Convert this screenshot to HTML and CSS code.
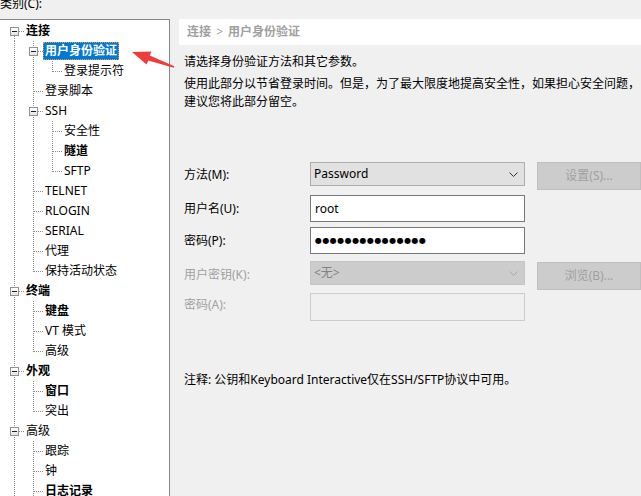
FILE: index.html
```html
<!DOCTYPE html>
<html lang="zh-CN">
<head>
<meta charset="utf-8">
<title>会话属性</title>
<link rel="stylesheet" href="styles.css">
</head>
<body>
<div class="cat-label">类别(C):</div>
<div class="main">
  <div class="tree">
    <div class="row"><span class="c f"><i class="box"></i></span><span class="lbl b">连接</span></div>
    <div class="row"><span class="c v"></span><span class="c t"><i class="box"></i></span><span class="lbl b sel">用户身份验证</span></div>
    <div class="row"><span class="c v"></span><span class="c v"></span><span class="c l"></span><span class="lbl">登录提示符</span></div>
    <div class="row"><span class="c v"></span><span class="c t"></span><span class="lbl">登录脚本</span></div>
    <div class="row"><span class="c v"></span><span class="c t"><i class="box"></i></span><span class="lbl">SSH</span></div>
    <div class="row"><span class="c v"></span><span class="c v"></span><span class="c t"></span><span class="lbl">安全性</span></div>
    <div class="row"><span class="c v"></span><span class="c v"></span><span class="c t"></span><span class="lbl b">隧道</span></div>
    <div class="row"><span class="c v"></span><span class="c v"></span><span class="c l"></span><span class="lbl">SFTP</span></div>
    <div class="row"><span class="c v"></span><span class="c t"></span><span class="lbl">TELNET</span></div>
    <div class="row"><span class="c v"></span><span class="c t"></span><span class="lbl">RLOGIN</span></div>
    <div class="row"><span class="c v"></span><span class="c t"></span><span class="lbl">SERIAL</span></div>
    <div class="row"><span class="c v"></span><span class="c t"></span><span class="lbl">代理</span></div>
    <div class="row"><span class="c v"></span><span class="c l"></span><span class="lbl">保持活动状态</span></div>
    <div class="row"><span class="c t"><i class="box"></i></span><span class="lbl b">终端</span></div>
    <div class="row"><span class="c v"></span><span class="c t"></span><span class="lbl b">键盘</span></div>
    <div class="row"><span class="c v"></span><span class="c t"></span><span class="lbl">VT 模式</span></div>
    <div class="row"><span class="c v"></span><span class="c l"></span><span class="lbl">高级</span></div>
    <div class="row"><span class="c t"><i class="box"></i></span><span class="lbl b">外观</span></div>
    <div class="row"><span class="c v"></span><span class="c t"></span><span class="lbl b">窗口</span></div>
    <div class="row"><span class="c v"></span><span class="c l"></span><span class="lbl">突出</span></div>
    <div class="row"><span class="c t"><i class="box"></i></span><span class="lbl">高级</span></div>
    <div class="row"><span class="c v"></span><span class="c t"></span><span class="lbl">跟踪</span></div>
    <div class="row"><span class="c v"></span><span class="c t"></span><span class="lbl">钟</span></div>
    <div class="row"><span class="c v"></span><span class="c t"></span><span class="lbl b">日志记录</span></div>
  </div>

  <div class="panel">
    <div class="crumb">连接 <span class="gt">&gt;</span> 用户身份验证</div>
    <div class="intro">
      <p class="p1">请选择身份验证方法和其它参数。</p>
      <p class="p2">使用此部分以节省登录时间。但是，为了最大限度地提高安全性，如果担心安全问题，建议您将此部分留空。</p>
    </div>

    <div class="form">
      <div class="flabel h26">方法(M):</div>
      <div class="select h24"><span class="sval">Password</span>
        <svg class="chev" width="9" height="5" viewBox="0 0 9 5"><path d="M0.5 0.5 L4.5 4.5 L8.5 0.5" fill="none" stroke="#333" stroke-width="1"/></svg>
      </div>
      <div class="btn">设置(S)...</div>

      <div class="flabel h27">用户名(U):</div>
      <div class="input h27">root</div>
      <div></div>

      <div class="flabel h27">密码(P):</div>
      <div class="input h27 pw">●●●●●●●●●●●●●●●</div>
      <div></div>

      <div class="flabel h27 dis">用户密钥(K):</div>
      <div class="select h24 sdis"><span class="sval">&lt;无&gt;</span>
        <svg class="chev" width="9" height="5" viewBox="0 0 9 5"><path d="M0.5 0.5 L4.5 4.5 L8.5 0.5" fill="none" stroke="#a8a8a8" stroke-width="1"/></svg>
      </div>
      <div class="btn btn2">浏览(B)...</div>

      <div class="flabel h24 dis">密码(A):</div>
      <div class="input idis h28"></div>
      <div></div>
    </div>

    <p class="note">注释: 公钥和Keyboard Interactive仅在SSH/SFTP协议中可用。</p>
  </div>
</div>

<svg class="arrow" width="641" height="496" viewBox="0 0 641 496">
  <polygon points="132,52 151.4,51.4 149.8,55.6 174.3,66.3 173.7,67.7 148.2,60.4 146.6,64.6" fill="#ee3b3b"/>
</svg>
</body>
</html>
```

FILE: styles.css
```css
html, body {
  margin: 0;
  padding: 0;
}
body {
  width: 641px;
  height: 496px;
  overflow: hidden;
  background: #f0f0f0;
  font-family: "Noto Sans", "Noto Sans CJK SC", sans-serif;
  font-size: 12px;
  color: #000;
  position: relative;
}
p { margin: 0; }

.cat-label {
  margin-top: -4px;
  height: 16px;
  line-height: 16px;
  margin-bottom: 7px;
  white-space: nowrap;
}

.main {
  display: flex;
  align-items: flex-start;
}

/* ---------- tree ---------- */
.tree {
  margin-left: -1px;
  width: 171px;
  height: 500px;
  box-sizing: border-box;
  border: 1px solid #828790;
  background: #fff;
  padding: 1px 0 0 5px;
  flex: none;
}
.row {
  display: flex;
  align-items: center;
  height: 20px;
}
.c {
  position: relative;
  flex: none;
  width: 19px;
  height: 20px;
}
.c::before, .c::after {
  content: "";
  position: absolute;
}
.c.v::before, .c.t::before, .c.l::before, .c.f::before {
  left: 9px;
  width: 1px;
  background: repeating-linear-gradient(to bottom, #8c8c8c 0 1px, transparent 1px 2px);
}
.c.v::before, .c.t::before { top: 0; bottom: 0; }
.c.l::before { top: 0; height: 11px; }
.c.f::before { top: 11px; bottom: 0; }
.c.t::after, .c.l::after, .c.f::after {
  left: 10px;
  right: 0;
  top: 10px;
  height: 1px;
  background: repeating-linear-gradient(to right, #8c8c8c 0 1px, transparent 1px 2px);
}
.box {
  position: absolute;
  z-index: 2;
  left: 5px;
  top: 6px;
  width: 9px;
  height: 9px;
  box-sizing: border-box;
  border: 1px solid #919191;
  background: linear-gradient(#ffffff, #e4e4e4);
}
.box::after {
  content: "";
  position: absolute;
  left: 1px;
  top: 3px;
  width: 5px;
  height: 1px;
  background: #1e1e1e;
}
.lbl {
  padding: 0 2px;
  line-height: 18px;
  height: 18px;
  white-space: nowrap;
}
.lbl.b { font-weight: bold; }
.lbl.sel {
  background: #0078d7;
  color: #fff;
  outline: 1px dotted #e0a040;
  outline-offset: -1px;
}

/* ---------- right panel ---------- */
.panel {
  margin-left: 9px;
  flex: 1;
  min-width: 0;
}
.crumb {
  height: 26px;
  line-height: 26px;
  background: #fff;
  padding-left: 8px;
  color: #a0a0a0;
  font-weight: bold;
  white-space: nowrap;
}
.crumb .gt {
  font-weight: normal;
  padding: 0 2px;
}
.intro {
  padding-left: 5px;
  margin-top: 8px;
}
.intro p {
  line-height: 18px;
}
.intro .p2 {
  margin-top: 4px;
}

.form {
  margin-top: 51px;
  padding-left: 5px;
  display: grid;
  grid-template-columns: 114px 215px 104px;
  grid-template-rows: 28px 27px 29px 27px 28px;
  column-gap: 12px;
  row-gap: 5px;
  align-items: start;
}
.flabel { white-space: nowrap; }
.flabel.dis { color: #a0a0a0; }
.h24 { height: 24px; line-height: 24px; }
.h26 { height: 26px; line-height: 26px; }
.h27 { height: 27px; line-height: 27px; }
.h28 { height: 28px; line-height: 28px; }

.select {
  box-sizing: border-box;
  border: 1px solid #adadad;
  background: #e1e1e1;
  display: flex;
  align-items: center;
  justify-content: space-between;
  padding: 0 6px 0 3px;
  line-height: 22px;
}
.select.sdis {
  background: #cccccc;
  border-color: #c4c4c4;
  color: #838383;
}
.chev { display: block; }

.input {
  box-sizing: border-box;
  border: 1px solid #7a7a7a;
  background: #fff;
  padding-left: 4px;
  line-height: 25px;
}
.input.pw {
  font-family: "DejaVu Sans", sans-serif;
  font-size: 8px;
  letter-spacing: 0.45px;
  line-height: 25px;
}
.input.idis {
  border-color: #cccccc;
  background: #f0f0f0;
}

.btn {
  box-sizing: border-box;
  height: 28px;
  border: 1px solid #bfbfbf;
  background: #cccccc;
  color: #a0a0a0;
  text-align: center;
  line-height: 26px;
  white-space: nowrap;
}
.btn2 { margin-top: 1px; }

.note {
  margin-top: 50px;
  padding-left: 5px;
  line-height: 18px;
  white-space: nowrap;
}

.arrow {
  position: absolute;
  left: 0;
  top: 0;
  pointer-events: none;
}
```
